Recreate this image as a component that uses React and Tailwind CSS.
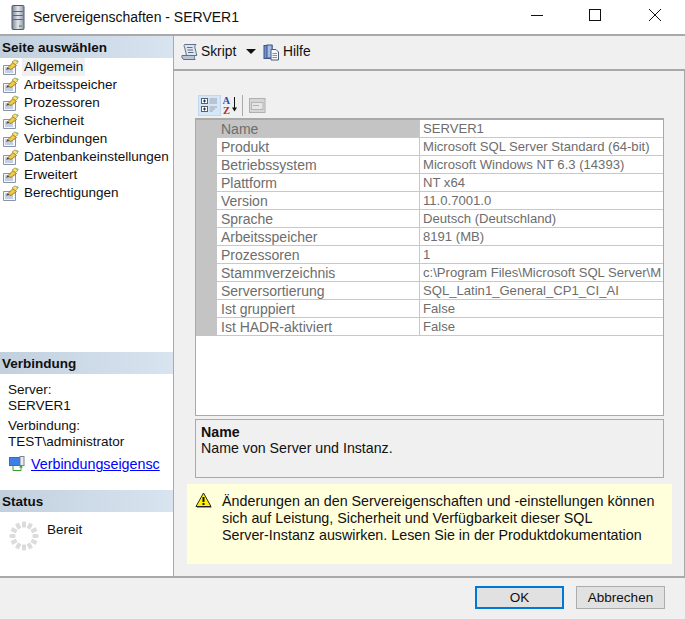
function PageIcon() {
  return (
    <svg width="19" height="16" viewBox="0 0 19 16" className="shrink-0">
      <path d="M3.5 6.5H15.5V15.5H3.5Z" fill="#f6f7fb" stroke="#8a94a6" />
      <path d="M5 9H11M5 11H13M5 13H13" stroke="#8fa6d4" />
      <path d="M7.5 9L13 3.5L16.5 6.5L11 10.5Z" fill="#f3c93f" stroke="#7d6a2a" strokeWidth="0.8" />
      <path d="M12 3L15 0.8L18 3.5L15.5 5.5Z" fill="#f8e27a" stroke="#8a7430" strokeWidth="0.6" />
      <path d="M16.5 1L18.5 3" stroke="#58a24a" />
      <path d="M6 10.8L7.5 8.5L9.3 10Z" fill="#4d4220" />
    </svg>
  );
}

function NavItem({ label, active }) {
  return (
    <div className="flex h-[18px] items-center">
      <PageIcon />
      <span className={`ml-[3px] h-[18px] px-[2px] leading-[18px] whitespace-nowrap ${active ? "bg-[#f0f0f0]" : ""}`}>{label}</span>
    </div>
  );
}

function SectionHeader({ children }) {
  return (
    <div className="flex h-[22px] items-center bg-gradient-to-r from-[#c2d0de] to-[#d8e4f0] pl-[2px] pt-px text-[13.5px] font-bold leading-none">
      {children}
    </div>
  );
}

function Row({ name, value, first }) {
  return (
    <div className="flex h-[18px] items-stretch">
      <div className={`w-[202px] shrink-0 border-b border-[#c8c8c8] pl-[4px] text-[14px] leading-[18px] whitespace-nowrap text-[#6d6d6d] ${first ? "bg-[#c4c4c4]" : "bg-white"}`}>{name}</div>
      <div className="min-w-0 flex-1 overflow-hidden border-b border-l border-[#c8c8c8] bg-white pl-[3px] text-[13.1px] leading-[18px] whitespace-nowrap text-[#6d6d6d]">{value}</div>
    </div>
  );
}

const rows = [
  ["Name", "SERVER1"],
  ["Produkt", "Microsoft SQL Server Standard (64-bit)"],
  ["Betriebssystem", "Microsoft Windows NT 6.3 (14393)"],
  ["Plattform", "NT x64"],
  ["Version", "11.0.7001.0"],
  ["Sprache", "Deutsch (Deutschland)"],
  ["Arbeitsspeicher", "8191 (MB)"],
  ["Prozessoren", "1"],
  ["Stammverzeichnis", "c:\\Program Files\\Microsoft SQL Server\\M"],
  ["Serversortierung", "SQL_Latin1_General_CP1_CI_AI"],
  ["Ist gruppiert", "False"],
  ["Ist HADR-aktiviert", "False"],
];

const nav = ["Allgemein", "Arbeitsspeicher", "Prozessoren", "Sicherheit", "Verbindungen", "Datenbankeinstellungen", "Erweitert", "Berechtigungen"];

function Spinner() {
  const dots = Array.from({ length: 12 }, (_, i) => i * 30);
  return (
    <svg width="30" height="30" viewBox="0 0 30 30" className="shrink-0">
      {dots.map((a) => (
        <rect key={a} x="12.9" y="0.5" width="4.2" height="6" rx="1" fill="#dcdcdc" transform={`rotate(${a} 15 15)`} />
      ))}
    </svg>
  );
}

export default function App() {
  return (
    <div className="flex h-[619px] w-[685px] flex-col overflow-hidden bg-white font-['Liberation_Sans',Arial,sans-serif] text-[13.5px] text-[#101010]">
      <header className="flex h-[34px] shrink-0 items-center pl-[11px]">
        <svg width="14" height="25" viewBox="0 0 14 25" className="shrink-0">
          <defs>
            <linearGradient id="srv" x1="0" x2="1" y1="0" y2="0">
              <stop offset="0" stopColor="#7b8494" />
              <stop offset="0.5" stopColor="#e3e7ee" />
              <stop offset="1" stopColor="#8d95a5" />
            </linearGradient>
          </defs>
          <rect x="1" y="0.5" width="12" height="24" rx="1" fill="url(#srv)" stroke="#4f5a70" />
          <path d="M2 6.5H12M2 10.5H12M2 14.5H12" stroke="#5d667a" />
          <rect x="8" y="20" width="3" height="2" fill="#62b85a" />
        </svg>
        <span className="ml-[8px] text-[14px] text-[#111]">Servereigenschaften - SERVER1</span>
        <div className="mb-[4px] ml-auto flex items-center">
          <svg width="14" height="14" viewBox="0 0 14 14" className="mr-[44px] shrink-0"><path d="M1 7.5H13" stroke="#111" /></svg>
          <svg width="14" height="14" viewBox="0 0 14 14" className="mr-[46px] shrink-0"><rect x="1.5" y="1.5" width="11" height="11" fill="none" stroke="#111" /></svg>
          <svg width="14" height="14" viewBox="0 0 14 14" className="mr-[23px] shrink-0"><path d="M1 1L13 13M13 1L1 13" stroke="#111" /></svg>
        </div>
      </header>

      <div className="flex min-h-0 flex-1 border-t-2 border-[#a9a9a9]">
        <aside className="flex w-[174px] shrink-0 flex-col border-r border-[#a9a9a9] bg-white">
          <SectionHeader>Seite auswählen</SectionHeader>
          <nav>
            {nav.map((n, i) => <NavItem key={n} label={n} active={i === 0} />)}
          </nav>
          <div className="mt-auto">
            <SectionHeader>Verbindung</SectionHeader>
            <div className="h-[116px] pl-[8px] pt-[8px] leading-[16px]">
              <div>Server:</div>
              <div>SERVER1</div>
              <div className="mt-[4px]">Verbindung:</div>
              <div>TEST\administrator</div>
              <div className="mt-[6px] flex items-center">
                <svg width="16" height="16" viewBox="0 0 16 16" className="ml-px shrink-0">
                  <rect x="0.5" y="1.5" width="10" height="8" fill="#3f7fe8" stroke="#54688c" />
                  <rect x="11" y="0.5" width="4" height="9" fill="#e8ecf2" stroke="#7a8494" />
                  <path d="M4 10V14.5H12V10" fill="none" stroke="#3f9a3a" />
                  <path d="M12 9L10 11.5H14Z" fill="#3f9a3a" />
                </svg>
                <a href="#" className="ml-[6px] text-[14.3px] text-[#0000ff] underline">Verbindungseigensc</a>
              </div>
            </div>
            <SectionHeader>Status</SectionHeader>
            <div className="flex h-[64px] pl-[9px] pt-[9px]">
              <Spinner />
              <span className="ml-[8px] mt-px leading-[16px]">Bereit</span>
            </div>
          </div>
        </aside>

        <main className="flex min-w-0 flex-1 flex-col bg-[#f0f0f0]">
          <div className="flex h-[35px] shrink-0 items-center border-b-2 border-[#a9a9a9] pb-[1px] pl-[7px]">
            <svg width="17" height="18" viewBox="0 0 17 18" className="shrink-0">
              <path d="M3.5 1.5H15C13.8 2.5 13.6 3.6 14 5L15.8 12.5H5.5L3.8 5C3.4 3.5 2.5 2.5 3.5 1.5Z" fill="#dfe5ee" stroke="#5f6f8c" />
              <path d="M1 12.5H14C13 14 13.2 15.5 14.2 16.5H3C1.5 16.5 0.5 14 1 12.5Z" fill="#b9c4d4" stroke="#5f6f8c" />
              <path d="M6 4.5H11.5M6.5 7H12M7 9.5H12.5" stroke="#5f6f8c" />
            </svg>
            <span className="ml-[3px] w-[35px] text-[13.8px]">Skript</span>
            <svg width="10" height="6" viewBox="0 0 10 6" className="ml-[10px] shrink-0"><path d="M0 0H10L5 5Z" fill="#111" /></svg>
            <svg width="17" height="17" viewBox="0 0 17 17" className="ml-[7px] shrink-0">
              <rect x="1" y="1.5" width="8" height="13" fill="#6f8fcc" stroke="#3c5488" />
              <rect x="4" y="1" width="5" height="13" fill="#a8bde4" stroke="#3c5488" />
              <path d="M8 5.5H13L15.5 8V16H8Z" fill="#f5f7fa" stroke="#4e5d78" />
              <path d="M9.5 9.5H14M9.5 11.5H14M9.5 13.5H14" stroke="#8391a8" />
            </svg>
            <span className="ml-[3px] text-[13.8px]">Hilfe</span>
          </div>

          <div className="flex min-h-0 flex-1 flex-col border-r border-[#a9a9a9] pl-[21px] pr-[20px] pt-[21px]">
            <div className="flex h-[26px] shrink-0 items-center pl-[3px]">
              <div className="flex h-[21px] w-[23px] items-center justify-center border border-[#c2d8ee] bg-[#d5e6f6]">
                <svg width="17" height="16" viewBox="0 0 17 16">
                  <rect x="0.5" y="1.5" width="6" height="5" fill="#fff" stroke="#55606e" />
                  <rect x="0.5" y="9.5" width="6" height="5" fill="#fff" stroke="#55606e" />
                  <path d="M2 4H5M2 12H5M3.5 2.5V5.5M3.5 10.5V13.5" stroke="#20304a" />
                  <path d="M8.5 2H16M8.5 4H16M8.5 6H16M8.5 10H16M8.5 12H14M8.5 14H12" stroke="#9aa3ac" />
                </svg>
              </div>
              <svg width="18" height="18" viewBox="0 0 18 18" className="ml-[1px] shrink-0">
                <text x="0.5" y="8" fontFamily="Liberation Serif, serif" fontWeight="700" fontSize="10.5" fill="#2c50b4">A</text>
                <text x="1" y="17.5" fontFamily="Liberation Serif, serif" fontWeight="700" fontSize="10.5" fill="#a83232">Z</text>
                <path d="M12.5 1V14" stroke="#111" />
                <path d="M10 11.5L12.5 15.5L15 11.5Z" fill="#111" />
              </svg>
              <div className="ml-[2px] h-[21px] w-px bg-[#a9a9a9]" />
              <svg width="17" height="15" viewBox="0 0 17 15" className="ml-[6px] shrink-0">
                <rect x="0.5" y="0.5" width="15.5" height="14" fill="#d6d6d6" stroke="#b0b0b0" />
                <rect x="2.5" y="4.5" width="11.5" height="7" fill="#e6e6e6" stroke="#b5b5b5" />
                <path d="M4 7.5H10" stroke="#b0b0b0" />
              </svg>
            </div>

            <div className="h-[298px] shrink-0 border border-t-2 border-[#a9a9a9] bg-white">
              <div className="flex">
                <div className="h-[216px] w-[21px] shrink-0 bg-[#c4c4c4]" />
                <div className="min-w-0 flex-1">
                  {rows.map(([n, v], i) => <Row key={n} name={n} value={v} first={i === 0} />)}
                </div>
              </div>
            </div>

            <div className="mt-[3px] h-[59px] shrink-0 border border-[#a9a9a9] pl-[5px] pt-[5px] text-[14.2px] leading-[15px]">
              <div className="font-bold">Name</div>
              <div className="mt-[1px]">Name von Server und Instanz.</div>
            </div>

            <div className="ml-[-8px] mt-[6px] flex h-[80px] w-[485px] shrink-0 bg-[#ffffdc] pl-[8px] pt-[9px]">
              <svg width="17" height="16" viewBox="0 0 17 16" className="mt-[-1px] shrink-0">
                <path d="M8.5 1L16 14.5H1Z" fill="#fff200" stroke="#222" strokeLinejoin="round" />
                <path d="M8.5 5V10" stroke="#111" strokeWidth="2" />
                <rect x="7.5" y="11" width="2" height="2" fill="#111" />
                <path d="M2 15.5H16.5" stroke="#9a9a9a" />
              </svg>
              <p className="ml-[10px] w-[450px] whitespace-nowrap text-[14.3px] leading-[17px]">
                Änderungen an den Servereigenschaften und -einstellungen können<br />
                sich auf Leistung, Sicherheit und Verfügbarkeit dieser SQL<br />
                Server-Instanz auswirken. Lesen Sie in der Produktdokumentation
              </p>
            </div>
          </div>
        </main>
      </div>

      <footer className="flex h-[43px] shrink-0 items-start border-t-2 border-[#a9a9a9] bg-[#f0f0f0] pl-[475px] pt-[8px]">
        <button className="h-[23px] w-[89px] border-2 border-[#0078d7] bg-[#e1e1e1] leading-none">OK</button>
        <button className="ml-[12px] h-[23px] w-[89px] border border-[#adadad] bg-[#e1e1e1] leading-none">Abbrechen</button>
      </footer>
    </div>
  );
}
